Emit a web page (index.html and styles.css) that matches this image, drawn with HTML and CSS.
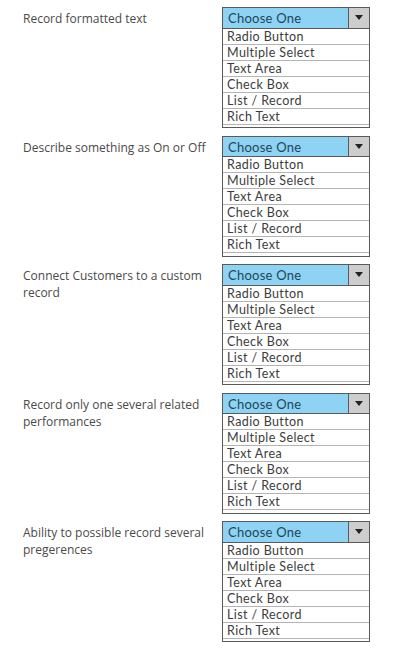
FILE: index.html
```html
<!DOCTYPE html>
<html lang="en">
<head>
  <meta charset="UTF-8">
  <title>Field Types</title>
  <link rel="stylesheet" href="styles.css">
</head>
<body>

  <div class="question">
    <div class="label">Record formatted text</div>
    <div class="select">
      <div class="select-head"><span class="current">Choose One</span><span class="arrow"></span></div>
      <ul class="options">
        <li>Radio Button</li>
        <li>Multiple Select</li>
        <li>Text Area</li>
        <li>Check Box</li>
        <li>List / Record</li>
        <li>Rich Text</li>
      </ul>
    </div>
  </div>

  <div class="question">
    <div class="label">Describe something as On or Off</div>
    <div class="select">
      <div class="select-head"><span class="current">Choose One</span><span class="arrow"></span></div>
      <ul class="options">
        <li>Radio Button</li>
        <li>Multiple Select</li>
        <li>Text Area</li>
        <li>Check Box</li>
        <li>List / Record</li>
        <li>Rich Text</li>
      </ul>
    </div>
  </div>

  <div class="question">
    <div class="label">Connect Customers to a custom record</div>
    <div class="select">
      <div class="select-head"><span class="current">Choose One</span><span class="arrow"></span></div>
      <ul class="options">
        <li>Radio Button</li>
        <li>Multiple Select</li>
        <li>Text Area</li>
        <li>Check Box</li>
        <li>List / Record</li>
        <li>Rich Text</li>
      </ul>
    </div>
  </div>

  <div class="question">
    <div class="label">Record only one several related performances</div>
    <div class="select">
      <div class="select-head"><span class="current">Choose One</span><span class="arrow"></span></div>
      <ul class="options">
        <li>Radio Button</li>
        <li>Multiple Select</li>
        <li>Text Area</li>
        <li>Check Box</li>
        <li>List / Record</li>
        <li>Rich Text</li>
      </ul>
    </div>
  </div>

  <div class="question">
    <div class="label">Ability to possible record several pregerences</div>
    <div class="select">
      <div class="select-head"><span class="current">Choose One</span><span class="arrow"></span></div>
      <ul class="options">
        <li>Radio Button</li>
        <li>Multiple Select</li>
        <li>Text Area</li>
        <li>Check Box</li>
        <li>List / Record</li>
        <li>Rich Text</li>
      </ul>
    </div>
  </div>

</body>
</html>
```

FILE: styles.css
```css
* {
  box-sizing: border-box;
}

body {
  margin: 0;
  padding-top: 7px;
  font-family: 'Open Sans', sans-serif;
  background-color: #fff;
  color: #444;
}

.question {
  display: flex;
  align-items: flex-start;
  height: 128.5px;
}

.label {
  flex: 0 0 222px;
  padding-left: 23px;
  padding-right: 4px;
  padding-top: 3px;
  font-size: 12px;
  line-height: 17px;
  color: #4a4a4a;
}

.select {
  flex: 0 0 148px;
  height: 121px;
  border: 1.5px solid #5a5a5a;
  background-color: #fff;
  font-family: 'Lato', sans-serif;
}

.select-head {
  display: flex;
  height: 20.5px;
  border-bottom: 1.5px solid #5a5a5a;
  background-color: #8fd3f4;
}

.current {
  flex: 1;
  padding-left: 5px;
  padding-top: 2px;
  font-size: 13px;
  line-height: 16px;
  letter-spacing: 0.25px;
  color: #1d4656;
}

.arrow {
  width: 21px;
  border-left: 1.5px solid #5a5a5a;
  background-color: #cdcdcd;
  position: relative;
}

.arrow::after {
  content: '';
  position: absolute;
  left: 5.5px;
  top: 7px;
  border-left: 4.5px solid transparent;
  border-right: 4.5px solid transparent;
  border-top: 5px solid #222;
}

.options {
  list-style: none;
  margin: 0;
  padding: 0;
}

.options li {
  height: 16px;
  padding-left: 4px;
  border-bottom: 1px solid #b4b4b4;
  font-size: 12.5px;
  line-height: 15px;
  letter-spacing: 0.4px;
  color: #3c3c3c;
}
```
